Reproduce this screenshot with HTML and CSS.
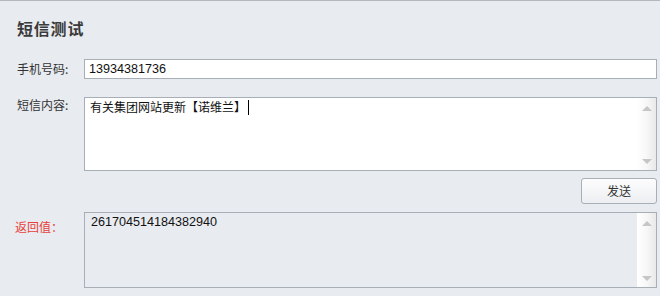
FILE: index.html
```html
<!DOCTYPE html>
<html lang="zh-CN">
<head>
<meta charset="utf-8">
<title>短信测试</title>
<link rel="stylesheet" href="styles.css">
</head>
<body>
<div class="page">
  <h1 class="title">短信测试</h1>
  <div class="row row-phone">
    <label class="label">手机号码:</label>
    <div class="input">13934381736</div>
  </div>
  <div class="row row-msg">
    <label class="label label-msg">短信内容:</label>
    <div class="area">
      <div class="area-text">有关集团网站更新【诺维兰】<span class="caret"></span></div>
      <div class="scroll"><span class="arrow up"></span><span class="arrow down"></span></div>
    </div>
  </div>
  <div class="row row-btn">
    <button class="btn">发送</button>
  </div>
  <div class="row row-ret">
    <label class="label label-ret">返回值：</label>
    <div class="area area-ret">
      <div class="area-text ret-text">261704514184382940</div>
      <div class="scroll"><span class="arrow up"></span><span class="arrow down"></span></div>
    </div>
  </div>
</div>
</body>
</html>
```

FILE: styles.css
```css
html, body {
  margin: 0;
  padding: 0;
  background: #e8ebf0;
  width: 660px;
  height: 296px;
  overflow: hidden;
}
.page {
  border-top: 1px solid #b3b8be;
  padding: 0 3px 0 17px;
  font-family: "Noto Sans CJK SC", "Liberation Sans", sans-serif;
  color: #333;
}
.title {
  margin: 17px 0 0 0;
  font-size: 16px;
  line-height: 20px;
  font-weight: bold;
  color: #3a3a3a;
  letter-spacing: 0.8px;
}
.row {
  display: flex;
  align-items: flex-start;
}
.label {
  width: 67px;
  flex: none;
  font-size: 12px;
  line-height: 20px;
  color: #333;
}
.row-phone { margin-top: 21px; }
.input {
  flex: 1;
  height: 18px;
  border: 1px solid #a8aeb5;
  background: #fff;
  font-family: "Liberation Sans", Arial, sans-serif;
  font-size: 12.6px;
  line-height: 18px;
  padding-left: 4px;
  color: #111;
}
.row-msg { margin-top: 18px; }
.label-msg { line-height: 18px; margin-top: -1px; }
.area {
  flex: 1;
  height: 72px;
  border: 1px solid #a8aeb5;
  background: #fff;
  display: flex;
}
.area-text {
  flex: 1;
  padding: 1px 0 0 5px;
  font-size: 12px;
  line-height: 16px;
  color: #111;
}
.caret {
  display: inline-block;
  width: 0;
  height: 15px;
  border-left: 1px solid #000;
  vertical-align: -3px;
  margin-left: 2px;
}
.scroll {
  width: 19px;
  flex: none;
  background: linear-gradient(to right, #ffffff 0%, #f7f7f7 50%, #e9e9e9 100%);
  display: flex;
  flex-direction: column;
  justify-content: space-between;
  align-items: center;
  padding: 8px 0 6px 0;
}
.arrow {
  width: 0;
  height: 0;
  border-left: 5px solid transparent;
  border-right: 5px solid transparent;
}
.arrow.up { border-bottom: 5px solid #c6c6c6; }
.arrow.down { border-top: 5px solid #c6c6c6; }
.row-btn {
  margin-top: 7px;
  justify-content: flex-end;
}
.btn {
  width: 76px;
  height: 26px;
  margin: 0;
  border: 1px solid #a9afb6;
  border-radius: 3px;
  background: linear-gradient(to bottom, #fdfdfd 0%, #f3f4f6 60%, #eceef1 100%);
  font-family: "Noto Sans CJK SC", sans-serif;
  font-size: 12px;
  color: #333;
  padding: 0;
  line-height: 24px;
}
.row-ret { margin-top: 8px; }
.label-ret {
  color: #e8403b;
  margin-left: -2px;
  width: 69px;
  line-height: 18px;
  margin-top: 6px;
}
.area-ret {
  height: 74px;
  background: #e8ebf0;
}
.ret-text {
  font-family: "Liberation Sans", Arial, sans-serif;
  font-size: 12.6px;
  line-height: 16px;
  padding: 1px 0 0 6px;
}
```
